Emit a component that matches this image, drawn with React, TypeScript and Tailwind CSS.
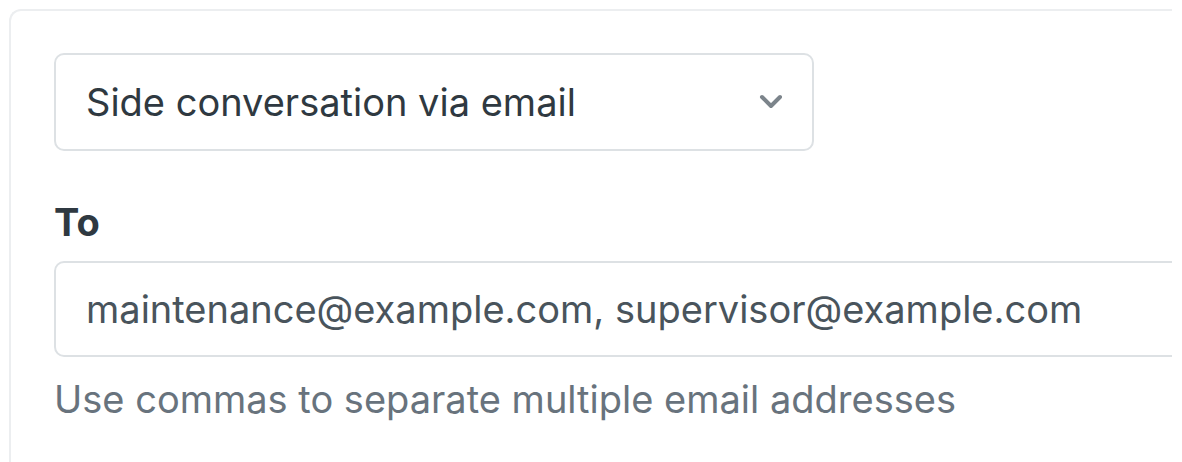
import React from 'react';

const font = { fontFamily: 'Inter, "Noto Sans", sans-serif' };

const App: React.FC = () => {
  return (
    <div className="w-[1182px] h-[462px] bg-white overflow-hidden pt-[9px] pl-[9px]" style={font}>
      {/* Card */}
      <div className="w-[1163px] h-[470px] border-2 border-r-0 border-[#eceef0] rounded-tl-[12px] overflow-hidden pt-[42px] pl-[43px]">
        {/* Channel select */}
        <div className="w-[760px] h-[98px] border-2 border-[#dde1e4] rounded-[10px] flex items-center justify-between pl-[30px] pr-[29px]">
          <span className="text-[38px] text-[#2f3941] leading-none">Side conversation via email</span>
          <svg width="24" height="16" viewBox="0 0 24 16" fill="none">
            <path d="M3 3l9 9 9-9" stroke="#7c848b" strokeWidth="4" strokeLinecap="round" strokeLinejoin="round" />
          </svg>
        </div>

        {/* To field */}
        <div className="mt-[52px]">
          <label className="block text-[38px] font-bold text-[#2f3941] leading-none">To</label>
          <div className="mt-[20px] w-[1200px] h-[96px] border-2 border-[#dde1e4] rounded-l-[10px] flex items-center pl-[30px]">
            <span className="text-[38px] text-[#49545c] leading-none">
              maintenance@example.com, supervisor@example.com
            </span>
          </div>
          <p className="mt-[23px] text-[38px] text-[#68737d] leading-none">
            Use commas to separate multiple email addresses
          </p>
        </div>
      </div>
    </div>
  );
};

export default App;
